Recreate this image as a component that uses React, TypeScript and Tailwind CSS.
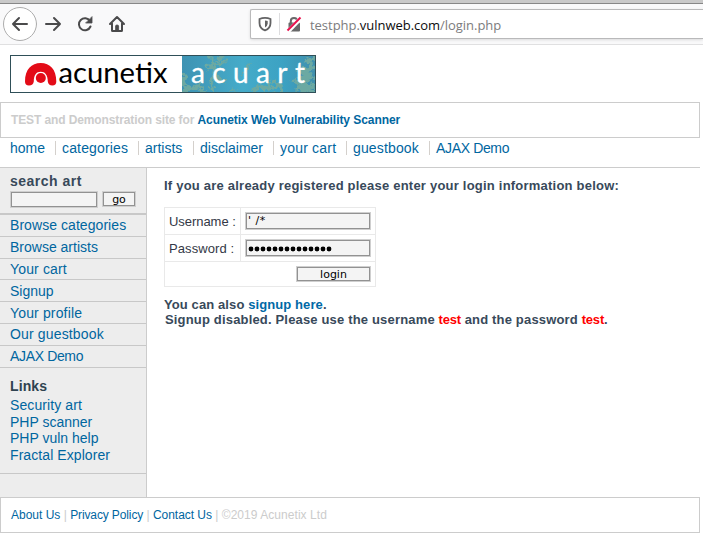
import type { ReactNode } from "react";

const arial = "font-['Liberation_Sans',Arial,sans-serif]";

function Toolbar() {
  return (
    <div className="flex h-[45px] w-full flex-col border-b border-[#e0e0e1] bg-[#f9f9fa]">
      <div className="h-1 shrink-0 border-b border-[#878787] bg-[#c9c9c9]" />
      <div className="flex h-10 items-start">
        <svg className="mt-[2px] ml-[2px] shrink-0" width="132" height="36" viewBox="2 6 132 36" fill="none" stroke="#4a4a4b" strokeWidth="2" strokeLinecap="round" strokeLinejoin="round">
          <circle cx="20" cy="24" r="16.5" fill="#fff" stroke="#adadad" strokeWidth="1" />
          <path d="M27 24H13M19 18L13 24L19 30" />
          <path d="M46 24H60M54 18L60 24L54 30" />
          <path d="M90 21A6 6 0 1 0 90.5 26.5" />
          <path d="M92 17V23H86Z" fill="#4a4a4b" strokeWidth="0.8" />
          <path d="M110 24L117 17L124 24M112 23.5V30.5Q112 31 112.5 31H121.5Q122 31 122 30.5V23.5" />
          <path d="M115.6 30V26Q115.6 25 117 25Q118.6 25 118.6 26V30Z" fill="#4a4a4b" strokeWidth="0.8" />
        </svg>
        <div className="mt-[5px] ml-[116px] flex h-[30px] min-w-0 flex-1 items-center rounded-l-[2px] border border-r-0 border-[#b9b9ba] bg-white shadow-[0_1px_3px_rgba(0,0,0,0.12)]">
          <svg className="shrink-0" width="58" height="28" viewBox="251 10 58 28">
            <path d="M265 17.8Q268 17.8 270.5 19V23Q270.5 28.5 265 30.3Q259.5 28.5 259.5 23V19Q262 17.8 265 17.8Z" fill="none" stroke="#636364" strokeWidth="1.8" />
            <path d="M265 20.5Q266.8 20.5 267.7 21V23.5Q267.5 26.3 265 27.6Z" fill="#636364" />
            <path d="M279.5 13V35" stroke="#dddddf" />
            <path d="M290.8 23V21Q290.8 18 294 18Q297.2 18 297.2 21V23" fill="none" stroke="#686869" strokeWidth="2" />
            <rect x="288.5" y="22.5" width="11.5" height="9" rx="1" fill="#686869" />
            <path d="M288 31.5L301 18" stroke="#fff" strokeWidth="4" />
            <path d="M287.5 30.5L300.5 17.5" stroke="#e8114d" strokeWidth="2" />
          </svg>
          <div className="ml-[1px] pt-px whitespace-nowrap font-['Open_Sans','Noto_Sans',sans-serif] text-[13px] leading-[26px] tracking-[-0.03px] text-[#7c7c7d]">
            testphp.<span className="text-[#0c0c0d]">vulnweb.com</span>/login.php
          </div>
        </div>
      </div>
    </div>
  );
}

function Logo() {
  return (
    <svg className="mt-[10px] ml-[10px] block shrink-0" width="306" height="38" viewBox="0 0 306 38">
      <defs>
        <linearGradient id="sea" x1="0" x2="1">
          <stop offset="0" stopColor="#3e93b3" />
          <stop offset="0.45" stopColor="#45abc9" />
          <stop offset="0.75" stopColor="#3ca2c3" />
          <stop offset="1" stopColor="#418fac" />
        </linearGradient>
        <filter id="rough" x="-10%" y="-10%" width="120%" height="120%">
          <feTurbulence type="fractalNoise" baseFrequency="0.25" numOctaves="3" seed="4" />
          <feDisplacementMap in="SourceGraphic" scale="9" xChannelSelector="R" yChannelSelector="G" />
        </filter>
        <clipPath id="art"><rect x="172" y="1" width="133" height="36" /></clipPath>
      </defs>
      <rect width="306" height="38" fill="#fff" />
      <rect x="172" y="0" width="134" height="38" fill="url(#sea)" />
      <g clipPath="url(#art)">
        <g filter="url(#rough)" fill="none" stroke="#6ca9a2" strokeLinecap="round">
          <path strokeWidth="3" d="M198 0L203 5L202 12L207 17L204 22L201 27L203 38M203 10L216 6M204 22L214 26M203 14L196 12M208 4L213 2" />
          <path strokeWidth="4" d="M171 17L175 22L172 28L181 33L171 38M181 33L190 31L194 38" />
          <path strokeWidth="3.5" d="M243 38L249 31L260 34L258 26M260 34L270 31L274 38M264 27L269 32" />
          <path strokeWidth="5" d="M307 2L298 6L302 13L292 16L300 22L288 26L299 31L286 33L306 37" />
          <path strokeWidth="1.5" d="M232 21L237 15L239 9M218 38L223 34L227 38" />
        </g>
      </g>
      <rect x="0.5" y="0.5" width="305" height="37" fill="none" stroke="#2f4f58" />
      <path d="M15 26.5C15 14.5 21.5 8 30.7 8C40 8 46.3 14.5 46.3 26.5Q46.3 30.6 42.3 30.6Q38.4 30.6 37.8 26.5C37.8 20 35 16.8 30.7 16.8C26.4 16.8 23.8 20 23.8 26.5Q23.2 30.6 19 30.6Q15 30.6 15 26.5Z" fill="#e30b17" />
      <circle cx="30.8" cy="23" r="5" fill="#e30b17" />
      <text x="48.5" y="28" fontFamily="Lato, sans-serif" fontSize="28" fill="#000" textLength="109" lengthAdjust="spacingAndGlyphs">acunetix</text>
      <text x="181" y="28" fontFamily="Lato, sans-serif" fontSize="28" fill="#fff" stroke="#fff" strokeWidth="0.3" textLength="114" lengthAdjust="spacing">acuart</text>
    </svg>
  );
}

const nav: [string, string][] = [
  ["home", "w-[46px]"],
  ["categories", "w-[83px] tracking-[0.15px]"],
  ["artists", "w-[55px]"],
  ["disclaimer", "w-[80px]"],
  ["your cart", "w-[73px] tracking-[0.2px]"],
  ["guestbook", "w-[83px] tracking-[0.15px]"],
  ["AJAX Demo", "w-[90px] tracking-[-0.35px]"],
];

const menu: [string, string][] = [
  ["Browse categories", "h-[22px] leading-[21px] tracking-[0.06px]"],
  ["Browse artists", "h-[22px] leading-[21px]"],
  ["Your cart", "h-[21px] leading-[21px] tracking-[0.15px]"],
  ["Signup", "h-[22px] leading-[22px]"],
  ["Your profile", "h-[22px] leading-[22px] tracking-[0.15px]"],
  ["Our guestbook", "h-[22px] leading-[21px] tracking-[0.15px]"],
  ["AJAX Demo", "h-[22px] leading-[21px] tracking-[-0.35px]"],
];

const box = "border border-[#cfcfcf] bg-[#f4f4f4] shadow-[inset_0_0_0_1px_#929292]";

function Button({ size, children }: { size: string; children: ReactNode }) {
  return (
    <button className={`${box} ${size} flex items-center justify-center pt-px font-['DejaVu_Sans',sans-serif] text-[11px] leading-none text-black`}>
      {children}
    </button>
  );
}

function Sidebar() {
  return (
    <aside className="flex h-[329px] w-[147px] shrink-0 flex-col border-r border-[#ccc] bg-[#ededed] text-[14px] text-[#00669f]">
      <div className="h-[47px] shrink-0 border-b-2 border-[#c8c8c8] pl-[10px]">
        <h2 className="h-[23px] pt-[5px] text-[14px] leading-4 font-bold tracking-[0.5px] text-[#38495a]">search art</h2>
        <div className="flex gap-1">
          <div className={`${box} h-[17px] w-[88px]`} />
          <Button size="w-[34px] h-[16px]">go</Button>
        </div>
      </div>
      {menu.map(([name, style]) => (
        <a key={name} className={`${style} shrink-0 border-b border-[#c8c8c8] pl-[10px]`}>{name}</a>
      ))}
      <div className="h-[106px] shrink-0 border-b border-[#c8c8c8] pt-[10px] pl-[10px] leading-[16.6px]">
        <h2 className="h-[19px] text-[14px] leading-4 font-bold tracking-[0.1px] text-[#2f4350]">Links</h2>
        <a className="block tracking-[0.1px]">Security art</a>
        <a className="block h-[16px] leading-[16px]">PHP scanner</a>
        <a className="block h-[17px] leading-[17px]">PHP vuln help</a>
        <a className="block tracking-[0.08px]">Fractal Explorer</a>
      </div>
    </aside>
  );
}

function Content() {
  return (
    <main className="pt-[10px] pl-[17px] text-[13px] whitespace-nowrap text-[#38495a]">
      <h1 className="h-[29px] font-bold leading-4 tracking-[0.22px]">If you are already registered please enter your login information below:</h1>
      <div className="grid h-[80px] w-[212px] grid-cols-[76px_134px] grid-rows-[26px_27px_25px] border border-[#e9e9e9] text-[#333846]">
        <div className="border-r border-[#e9e9e9] pl-1 leading-[27px] tracking-[-0.05px]">Username :</div>
        <div className="pt-1 pl-1">
          <div className={`${box} flex h-[18px] w-[126px] items-center pl-[2px] font-['DejaVu_Sans',sans-serif] text-[11px] tracking-[0.5px] text-black`}>' /*</div>
        </div>
        <div className="border-t border-r border-[#e9e9e9] pl-1 leading-[27px] tracking-[0.08px]">Password :</div>
        <div className="border-t border-[#e9e9e9] pt-1 pl-1">
          <div className={`${box} flex h-[18px] w-[126px] items-center gap-[2px] pt-px pl-[3px]`}>
            {Array.from({ length: 14 }, (_, i) => <span key={i} className="size-1 rounded-full bg-black ring-[0.4px] ring-black" />)}
          </div>
        </div>
        <div className="col-span-2 flex justify-end border-t border-[#e9e9e9] pt-1 pr-1">
          <Button size="w-[75px] h-[16px]">login</Button>
        </div>
      </div>
      <div className="pt-[10px] font-bold leading-[15px]">
        <p className="tracking-[0.1px]">You can also <a className="text-[#0069a6]">signup here</a>.</p>
        <p className="pl-px tracking-[0.17px]">Signup disabled. Please use the username <span className="tracking-[-0.2px] text-[#f00]">test</span> and the password <span className="tracking-[-0.2px] text-[#f00]">test</span>.</p>
      </div>
    </main>
  );
}

export default function App() {
  return (
    <div className={`${arial} flex h-[533px] w-[703px] flex-col overflow-hidden bg-white`}>
      <Toolbar />
      <Logo />
      <div className="mt-[9px] h-[36px] w-[700px] shrink-0 border border-[#ccc] pl-[10px] text-[12px] leading-[34px] font-bold tracking-[-0.11px] text-[#ccc]">
        TEST and Demonstration site for <a className="tracking-[-0.06px] text-[#00669f]">Acunetix Web Vulnerability Scanner</a>
      </div>
      <nav className="flex h-[30px] w-[700px] shrink-0 border-b border-[#ccc] pt-[3px] pl-[10px] text-[14px] leading-[14px] whitespace-nowrap text-[#00669f]">
        {nav.map(([name, style], i) => (
          <a key={name} className={`${style} ${i ? "pl-[6px]" : ""} ${i < nav.length - 1 ? "border-r border-[#d4d0cc]" : ""} h-[14px]`}>{name}</a>
        ))}
      </nav>
      <div className="flex h-[329px] shrink-0">
        <Sidebar />
        <Content />
      </div>
      <footer className="h-[36px] w-[700px] shrink-0 border border-[#ccc] pl-[10px] text-[12px] leading-[34px] text-[#ccc]">
        <a className="text-[#00669f]">About Us</a> | <a className="tracking-[-0.12px] text-[#00669f]">Privacy Policy</a> | <a className="tracking-[-0.04px] text-[#00669f]">Contact Us</a> | <span className="tracking-[0.05px]">©2019 Acunetix Ltd</span>
      </footer>
    </div>
  );
}
